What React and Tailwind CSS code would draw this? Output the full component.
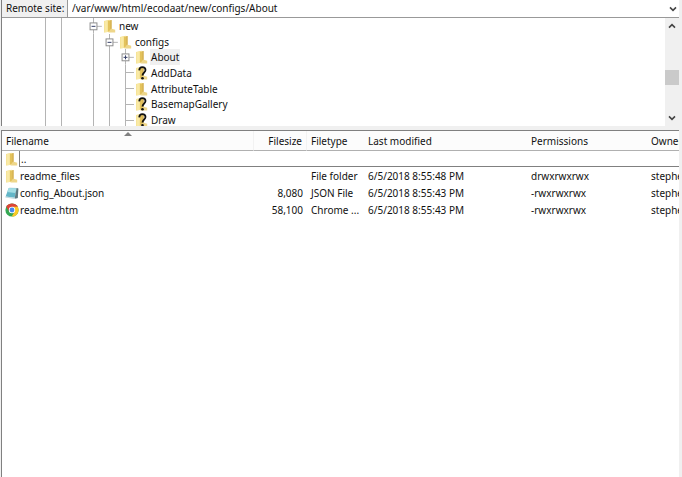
import React from "react";

function Folder({ unknown = false }) {
  return (
    <svg viewBox="0 0 14 14" className="h-[14px] w-[14px] shrink-0" aria-hidden="true">
      <path d="M1 2 6.6 .8v12L1 13.4z" fill="#f3dc84" />
      <path d="M1.4 2.2 4.6 1.5v11.4L1.4 13.2z" fill="#f9e9a6" />
      <path d="M5 2 8.4 1v10.4L5 12.4z" fill="#e3c25c" />
      <path d="M7.4 1.3 8.6 1v9.4l-1.2.4z" fill="#d2ae50" />
      <path d="M8 9.6 12.2 10.8v2.6H5.4z" fill="#eed68a" />
      {unknown && (
        <g>
          <path
            d="M4.2 4.4C4.4 2.2 5.6 1.1 7.3 1.1c1.9 0 3.2 1.1 3.2 2.9 0 2.4-3 3-3 5.6"
            fill="none"
            stroke="#111"
            strokeWidth="1.8"
          />
          <circle cx="7.5" cy="12.2" r="1.3" fill="#111" />
        </g>
      )}
    </svg>
  );
}

function Notepad() {
  return (
    <svg viewBox="0 0 14 14" className="h-[14px] w-[14px] shrink-0" aria-hidden="true">
      <path d="M4.4 1.2 13 2 12.4 12.8 .4 11.4z" fill="#dfe9ec" />
      <path d="M3.8 2 11.6 2.4 9.6 11.8 .6 10.4z" fill="#62b6c8" />
      <path d="M3.8 2 11.6 2.4 10.4 7 2 6z" fill="#a3dde4" />
      <path d="M11.6 2 13.4 2.6 12.8 12 9.6 12.8z" fill="#5d7880" />
      <path d="M.6 10.4 9.6 11.8 9.4 13 .4 11.4z" fill="#c4dbe0" />
    </svg>
  );
}

function Chrome() {
  return (
    <svg viewBox="0 0 14 14" className="h-[14px] w-[14px] shrink-0" aria-hidden="true">
      <circle cx="7" cy="7" r="6.6" fill="#35a853" />
      <path d="M7 7 1.3 3.7A6.6 6.6 0 0 1 12.7 3.7z" fill="#dd4437" />
      <path d="M7 3.8h5.7A6.6 6.6 0 0 1 6.7 13.6L9.7 8.5z" fill="#fbc926" />
      <path d="M1.3 3.7 4.3 8.6 7 7V3.8z" fill="#dd4437" />
      <circle cx="7" cy="7" r="3.2" fill="#fff" />
      <circle cx="7" cy="7" r="2.4" fill="#4587ee" />
    </svg>
  );
}

function Chevron({ up = false }) {
  return (
    <svg viewBox="0 0 8 8" className="h-2 w-2" fill="none" stroke="#444" strokeWidth="1.6" aria-hidden="true">
      <path d={up ? "M1 5.6 4 2.6 7 5.6" : "M1 2.4 4 5.4 7 2.4"} />
    </svg>
  );
}

// One 16px cell of the tree's connector lines.
function Guide({ kind }) {
  if (kind === "blank") return <span className="w-4 shrink-0" />;
  return (
    <span className="flex w-4 shrink-0 items-stretch">
      <span className="w-[7px] shrink-0" />
      <span className="w-px shrink-0 bg-[#b4b4b4]" />
      {kind === "branch" && <span className="h-px grow self-center bg-[#b4b4b4]" />}
    </span>
  );
}

function Expander({ open, label }) {
  return (
    <button aria-label={label} aria-expanded={open} className="flex w-4 shrink-0 items-stretch">
      <svg viewBox="0 0 16 16" className="h-full w-4" fill="none" aria-hidden="true">
        <path d="M7.5 0v16M7.5 8.5H16" stroke="#b4b4b4" />
        <rect x="4" y="5" width="7" height="7" fill="#fff" stroke="#8c8c8c" />
        <path d={open ? "M5.5 8.5h4" : "M5.5 8.5h4M7.5 6.5v4"} stroke="#333c66" />
      </svg>
    </button>
  );
}

const TREE = [
  { name: "new", guides: ["line", "line", "blank"], open: true },
  { name: "configs", guides: ["line", "line", "blank", "line"], open: true },
  { name: "About", guides: ["line", "line", "blank", "line", "line"], open: false, selected: true },
  { name: "AddData", guides: ["line", "line", "blank", "line", "line", "branch"], unknown: true },
  { name: "AttributeTable", guides: ["line", "line", "blank", "line", "line", "branch"] },
  { name: "BasemapGallery", guides: ["line", "line", "blank", "line", "line", "branch"], unknown: true },
  { name: "Draw", guides: ["line", "line", "blank", "line", "line", "branch"], unknown: true },
];

const FILES = [
  { name: "readme_files", icon: <Folder />, size: "", type: "File folder", date: "6/5/2018 8:55:48 PM", perm: "drwxrwxrwx" },
  { name: "config_About.json", icon: <Notepad />, size: "8,080", type: "JSON File", date: "6/5/2018 8:55:43 PM", perm: "-rwxrwxrwx" },
  { name: "readme.htm", icon: <Chrome />, size: "58,100", type: "Chrome ...", date: "6/5/2018 8:55:43 PM", perm: "-rwxrwxrwx" },
];

function SiteBar() {
  return (
    <div className="flex h-[18px] items-stretch border-b border-[#999] bg-white">
      <label htmlFor="remote-site" className="flex w-[66px] shrink-0 items-center border-r border-[#999] bg-[#f0f0f0] pb-px pl-1 whitespace-nowrap">
        Remote site:
      </label>
      <div className="grid grow items-center">
        <select id="remote-site" className="col-start-1 row-start-1 h-full w-full appearance-none bg-transparent pb-px pl-1 outline-none">
          <option>/var/www/html/ecodaat/new/configs/About</option>
        </select>
        <span className="pointer-events-none col-start-1 row-start-1 mr-[2px] justify-self-end">
          <Chevron />
        </span>
      </div>
    </div>
  );
}

function RemoteTree() {
  return (
    <div className="flex h-[108px] overflow-hidden bg-white">
      <ul className="grid h-[110px] grow grid-rows-7 pl-9 leading-[13px]">
        {TREE.map((n) => (
          <li key={n.name} className="flex min-h-0 items-stretch">
            {n.guides.map((g, i) => (
              <Guide key={i} kind={g} />
            ))}
            {n.open !== undefined && <Expander open={n.open} label={n.name} />}
            <span className="flex w-4 shrink-0 items-center justify-center">
              <Folder unknown={n.unknown} />
            </span>
            <span className={"flex items-center px-px pt-px " + (n.selected ? "bg-[#f0f0f0]" : "")}>{n.name}</span>
          </li>
        ))}
      </ul>
      <div className="flex w-[14px] shrink-0 flex-col items-center bg-[#f0f0f0] pb-[3px]">
        <button aria-label="Scroll up" className="flex h-[15px] items-center">
          <Chevron up />
        </button>
        <div className="h-[37px]" />
        <div className="h-[15px] w-full bg-[#cacaca]" />
        <div className="grow" />
        <button aria-label="Scroll down" className="flex h-[11px] items-center">
          <Chevron />
        </button>
      </div>
    </div>
  );
}

function FileList() {
  const head = "h-5 border-b border-[#b0b0b0] bg-[#fcfcfc] px-1 pt-[2px] pb-0 font-normal whitespace-nowrap";
  const cell = "h-[17px] overflow-hidden px-1 pt-[2px] pb-0 whitespace-nowrap";
  return (
    <div className="grow overflow-hidden border-t border-[#808080] bg-white">
      <table className="w-full table-fixed border-separate border-spacing-0 text-left">
        <colgroup>
          <col className="w-[252px]" />
          <col className="w-[53px]" />
          <col className="w-[57px]" />
          <col className="w-[163px]" />
          <col className="w-[120px]" />
          <col />
        </colgroup>
        <thead>
          <tr>
            <th className={head + " relative border-r border-r-[#f2f2f2]"} aria-sort="ascending">
              Filename
              <svg viewBox="0 0 8 4" className="absolute top-px left-1/2 h-1 w-2 -translate-x-1/2" aria-hidden="true">
                <path d="M0 4 4 0 8 4z" fill="#808080" />
              </svg>
            </th>
            <th className={head + " border-r border-r-[#f2f2f2] text-right"}>Filesize</th>
            <th className={head}>Filetype</th>
            <th className={head}>Last modified</th>
            <th className={head}>Permissions</th>
            <th className={head + " overflow-hidden"}>Owner</th>
          </tr>
        </thead>
        <tbody>
          <tr>
            <td colSpan={6} className="h-4 p-0">
              <div className="flex h-4 items-center pl-[3px]">
                <Folder />
                <span className="flex h-4 grow items-center border-b border-l border-[#808080] pt-px pl-px">..</span>
              </div>
            </td>
          </tr>
          {FILES.map((f) => (
            <tr key={f.name}>
              <td className="h-[17px] p-0">
                <span className="flex items-center gap-px pl-[3px]">
                  {f.icon}
                  <span className="pt-[2px]">{f.name}</span>
                </span>
              </td>
              <td className={cell + " text-right"}>{f.size}</td>
              <td className={cell}>{f.type}</td>
              <td className={cell}>{f.date}</td>
              <td className={cell}>{f.perm}</td>
              <td className={cell}>stephen</td>
            </tr>
          ))}
        </tbody>
      </table>
    </div>
  );
}

export default function App() {
  return (
    <main className="flex h-screen flex-col overflow-hidden bg-[#f0f0f0] pr-[3px] pl-px font-['Noto_Sans','Open_Sans',sans-serif] text-[10px] leading-[15px] text-[#111]">
      <div className="border-l border-[#808080]">
        <SiteBar />
        <RemoteTree />
      </div>
      <div className="h-1 shrink-0" />
      <div className="flex grow flex-col border-l border-[#808080]">
        <FileList />
      </div>
    </main>
  );
}
